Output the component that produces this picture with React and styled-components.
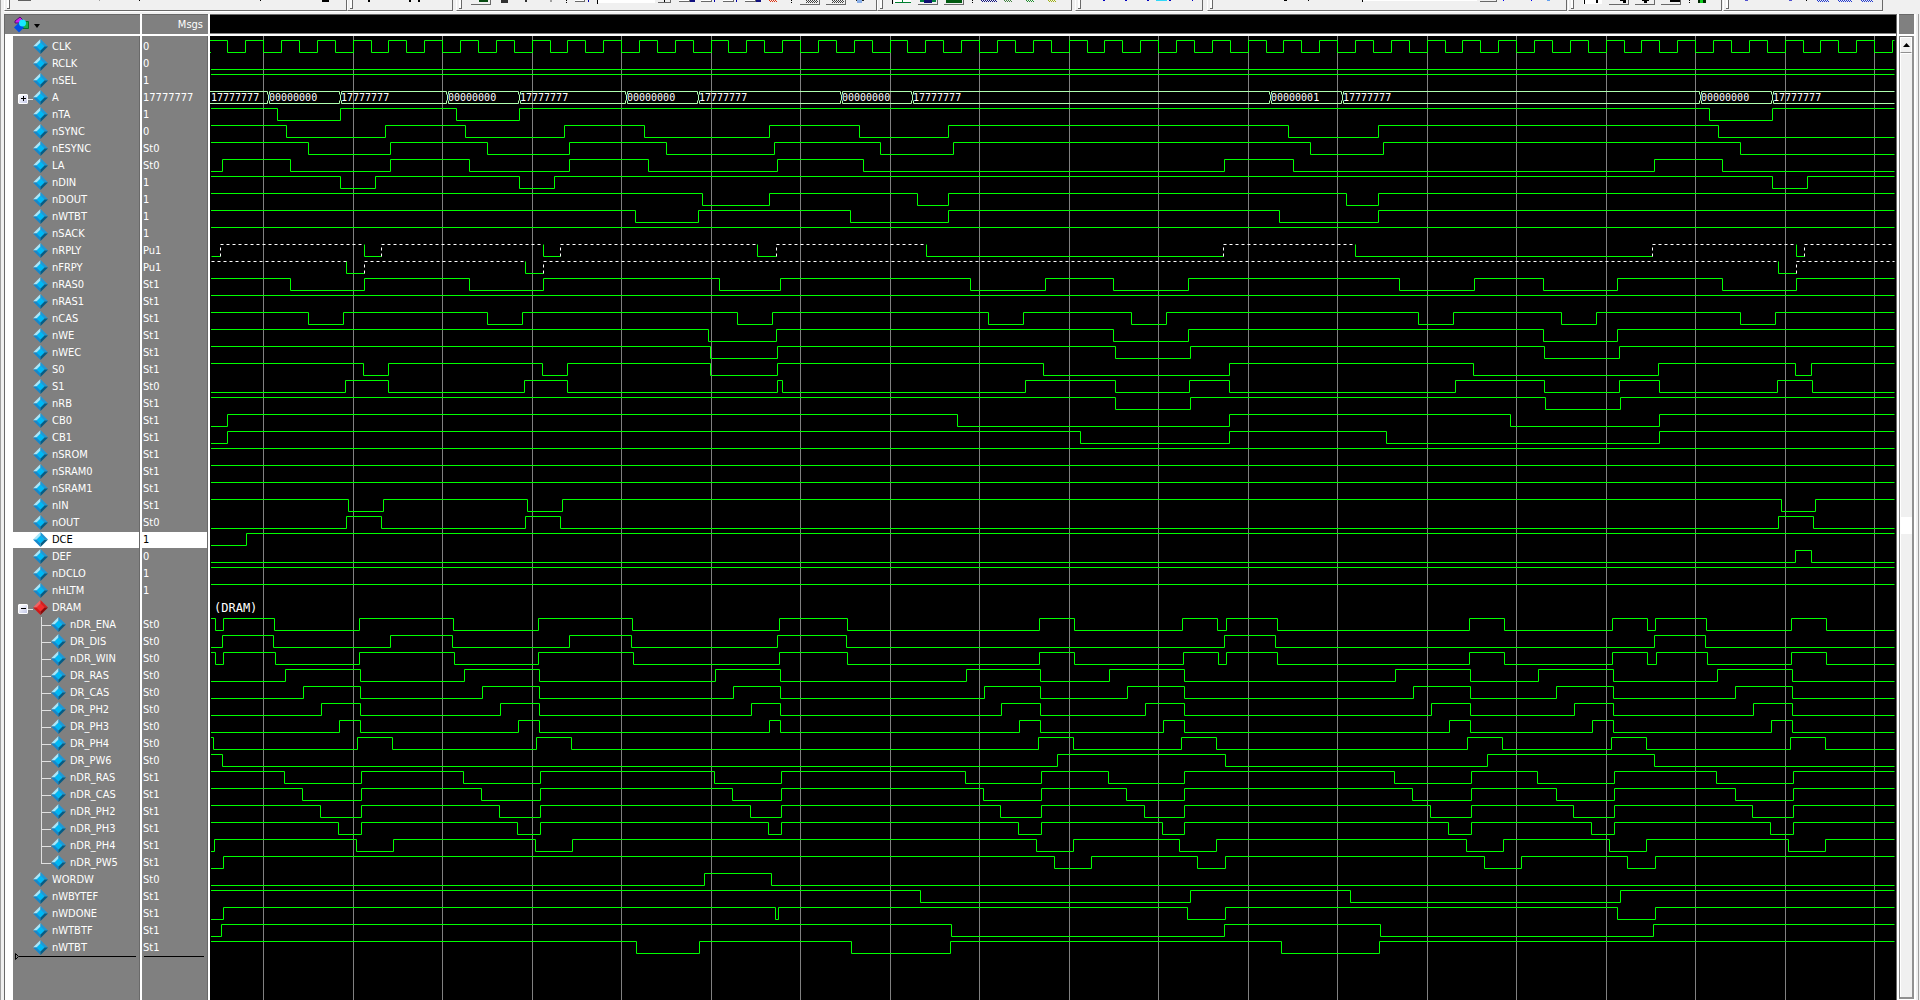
import React from 'react';
import styled, {createGlobalStyle} from 'styled-components';

const ROW = 17;
const LEFT = 210;
const RIGHT = 1894;
const GRID = [263, 353, 442, 532, 621, 711, 800, 890, 979, 1069, 1158, 1248, 1337, 1427, 1516, 1606, 1695, 1785, 1874];

const clock = Array.from({length: 95}, (_, n) => Math.floor(209.9 + 17.9 * n));

// name, value, level at the left edge, x of every toggle after it
const signals = [
  {name: 'CLK', value: '0', start: 0, edges: clock},
  {name: 'RCLK', value: '0', start: 0, edges: []},
  {name: 'nSEL', value: '1', start: 1, edges: []},
  {name: 'A', value: '17777777', box: '+', bus: [
    [210, '17777777'], [268, '00000000'], [340, '17777777'], [447, '00000000'], [519, '17777777'],
    [626, '00000000'], [698, '17777777'], [841, '00000000'], [912, '17777777'], [1270, '00000001'],
    [1342, '17777777'], [1700, '00000000'], [1772, '17777777'],
  ]},
  {name: 'nTA', value: '1', start: 1, edges: [277, 340, 456, 519, 1709, 1772]},
  {name: 'nSYNC', value: '0', start: 1, edges: [286, 385, 465, 564, 644, 769, 859, 948, 1288, 1378, 1718]},
  {name: 'nESYNC', value: 'St0', start: 1, edges: [308, 390, 487, 569, 666, 774, 880, 953, 1310, 1383, 1740]},
  {name: 'LA', value: 'St0', start: 0, edges: [222, 290, 390, 469, 569, 648, 777, 863, 1224, 1293, 1654, 1722]},
  {name: 'nDIN', value: '1', start: 1, edges: [340, 375, 519, 554, 1772, 1807]},
  {name: 'nDOUT', value: '1', start: 1, edges: [702, 769, 917, 948, 1346, 1378]},
  {name: 'nWTBT', value: '1', start: 1, edges: [635, 698, 850, 948, 1279, 1378]},
  {name: 'nSACK', value: '1', start: 1, edges: []},
  {name: 'nRPLY', value: 'Pu1', pull: true, start: 0, edges: [220, 364, 381, 543, 560, 757, 776, 926, 1223, 1355, 1652, 1796, 1804]},
  {name: 'nFRPY', value: 'Pu1', pull: true, start: 1, edges: [346, 364, 525, 543, 1778, 1796]},
  {name: 'nRAS0', value: 'St1', start: 1, edges: [290, 364, 469, 543, 719, 780, 970, 1045, 1113, 1188, 1399, 1474, 1543, 1617, 1722, 1796]},
  {name: 'nRAS1', value: 'St1', start: 1, edges: []},
  {name: 'nCAS', value: 'St1', start: 1, edges: [308, 343, 487, 522, 737, 772, 988, 1023, 1131, 1166, 1418, 1453, 1561, 1596, 1740, 1775]},
  {name: 'nWE', value: 'St1', start: 1, edges: [708, 776, 1113, 1188, 1543, 1617]},
  {name: 'nWEC', value: 'St1', start: 1, edges: [710, 777, 1115, 1190, 1544, 1619]},
  {name: 'S0', value: 'St1', start: 1, edges: [363, 388, 542, 567, 710, 777, 1043, 1229, 1473, 1658, 1795, 1811]},
  {name: 'S1', value: 'St0', start: 0, edges: [345, 388, 524, 567, 777, 782, 1025, 1115, 1189, 1229, 1455, 1544, 1619, 1659, 1777, 1812]},
  {name: 'nRB', value: 'St1', start: 1, edges: [1115, 1190, 1545, 1620]},
  {name: 'CB0', value: 'St1', start: 0, edges: [227, 957, 1229, 1510, 1659]},
  {name: 'CB1', value: 'St1', start: 0, edges: [227, 1080, 1229, 1386, 1659]},
  {name: 'nSROM', value: 'St1', start: 1, edges: []},
  {name: 'nSRAM0', value: 'St1', start: 1, edges: []},
  {name: 'nSRAM1', value: 'St1', start: 1, edges: []},
  {name: 'nIN', value: 'St1', start: 1, edges: [348, 383, 527, 562, 1781, 1815]},
  {name: 'nOUT', value: 'St0', start: 0, edges: [346, 381, 525, 560, 1778, 1813]},
  {name: 'DCE', value: '1', selected: true, start: 0, edges: [246]},
  {name: 'DEF', value: '0', start: 0, edges: [1795, 1811]},
  {name: 'nDCLO', value: '1', start: 1, edges: []},
  {name: 'nHLTM', value: '1', start: 1, edges: []},
  {name: 'DRAM', value: '', box: '-', group: true},
  {name: 'nDR_ENA', value: 'St0', child: true, start: 1, edges: [215, 223, 274, 359, 453, 538, 632, 779, 847, 1039, 1074, 1182, 1217, 1226, 1277, 1469, 1504, 1612, 1647, 1655, 1706, 1791, 1826]},
  {name: 'DR_DIS', value: 'St0', child: true, start: 0, edges: [222, 273, 390, 452, 569, 631, 777, 846, 1224, 1275, 1654, 1705]},
  {name: 'nDR_WIN', value: 'St0', child: true, start: 1, edges: [215, 223, 275, 359, 454, 538, 633, 779, 847, 1039, 1074, 1183, 1218, 1226, 1277, 1469, 1504, 1612, 1647, 1656, 1707, 1791, 1826]},
  {name: 'DR_RAS', value: 'St0', child: true, start: 0, edges: [285, 360, 464, 539, 715, 780, 966, 1040, 1109, 1184, 1395, 1470, 1538, 1613, 1717, 1792]},
  {name: 'DR_CAS', value: 'St0', child: true, start: 0, edges: [303, 360, 482, 539, 733, 780, 984, 1040, 1127, 1184, 1413, 1470, 1556, 1613, 1735, 1792]},
  {name: 'DR_PH2', value: 'St0', child: true, start: 0, edges: [321, 360, 500, 539, 751, 780, 1001, 1040, 1145, 1184, 1431, 1470, 1574, 1613, 1753, 1792]},
  {name: 'DR_PH3', value: 'St0', child: true, start: 0, edges: [339, 360, 518, 539, 769, 780, 1019, 1040, 1163, 1184, 1449, 1470, 1592, 1613, 1771, 1792]},
  {name: 'DR_PH4', value: 'St0', child: true, start: 1, edges: [213, 357, 392, 536, 571, 1038, 1073, 1181, 1216, 1467, 1502, 1611, 1646, 1790, 1825]},
  {name: 'DR_PW6', value: 'St0', child: true, start: 1, edges: [222, 1057, 1225, 1487, 1654]},
  {name: 'nDR_RAS', value: 'St1', child: true, start: 1, edges: [284, 361, 463, 540, 714, 781, 965, 1041, 1108, 1184, 1394, 1471, 1537, 1614, 1716, 1793]},
  {name: 'nDR_CAS', value: 'St1', child: true, start: 1, edges: [302, 361, 481, 540, 732, 781, 983, 1041, 1126, 1184, 1412, 1471, 1556, 1614, 1735, 1793]},
  {name: 'nDR_PH2', value: 'St1', child: true, start: 1, edges: [320, 361, 499, 540, 750, 781, 1000, 1041, 1144, 1184, 1430, 1471, 1573, 1614, 1752, 1793]},
  {name: 'nDR_PH3', value: 'St1', child: true, start: 1, edges: [338, 361, 517, 540, 768, 781, 1018, 1041, 1162, 1184, 1448, 1471, 1591, 1614, 1770, 1793]},
  {name: 'nDR_PH4', value: 'St1', child: true, start: 0, edges: [214, 356, 393, 535, 572, 1036, 1073, 1179, 1216, 1466, 1503, 1609, 1646, 1788, 1825]},
  {name: 'nDR_PW5', value: 'St1', child: true, last: true, start: 0, edges: [223, 1054, 1091, 1197, 1225, 1484, 1521, 1627, 1655]},
  {name: 'WORDW', value: 'St0', start: 0, edges: [704, 771]},
  {name: 'nWBYTEF', value: 'St1', start: 1, edges: [920, 1190, 1350, 1620]},
  {name: 'nWDONE', value: 'St1', start: 0, edges: [223, 775, 778, 1187, 1225, 1617, 1655]},
  {name: 'nWTBTF', value: 'St1', start: 0, edges: [221, 951, 1224, 1380, 1653]},
  {name: 'nWTBT', value: 'St1', start: 1, edges: [636, 699, 851, 950, 1281, 1379]},
];

// bottoms of the toolbar icons: [x, width, height, colour, kind]
const toolbars = [
  {from: 4, to: 347, parts: [[18, 13, 1, '#606060'], [99, 1, 1, '#a0a0a0'], [139, 1, 1, '#000'], [260, 1, 1, '#000'], [322, 7, 2, '#000']]},
  {from: 347, to: 453, parts: [[368, 2, 2, '#000'], [409, 2, 2, '#000'], [418, 2, 2, '#000']]},
  {from: 456, to: 877, parts: [
    [471, 20, 5, '#f0f0f0', 'button'], [479, 9, 2, '#064a10'], [501, 7, 3, '#303030'], [525, 2, 2, '#303030'], [550, 2, 2, '#a0a0a0'],
    [566, 1, 1, '#000'], [566, 1, 1, '#000', 'dot'], [575, 10, 2, '#fff', 'button'], [588, 1, 2, '#0000b0'], [597, 58, 4, '#fff', 'field'],
    [658, 13, 3, '#f0f0f0', 'button'], [664, 1, 2, '#000'],
    [679, 11, 2, '#fff', 'button'], [690, 5, 2, '#101080'], [701, 11, 2, '#fff', 'button'], [714, 1, 2, '#0000b0'],
    [723, 11, 2, '#fff', 'button'], [736, 1, 2, '#0000b0'], [745, 11, 2, '#fff', 'button'], [756, 5, 2, '#101080'],
    [769, 9, 2, '#e03010', 'dither'], [791, 1, 1, '#000'], [791, 1, 1, '#000', 'dot'],
    [800, 20, 5, '#f0f0f0', 'button'], [806, 12, 3, '#404040', 'dither'], [826, 20, 5, '#f0f0f0', 'button'], [832, 12, 3, '#404040', 'dither'],
    [856, 8, 1, '#202020'], [857, 5, 3, '#88aee8'],
  ]},
  {from: 877, to: 1072, parts: [
    [892, 1, 4, '#000'], [894, 17, 3, '#fff'], [902, 1, 3, '#008030'], [895, 16, 1, '#008030', 'dot'],
    [918, 20, 5, '#f0f0f0', 'button'], [920, 16, 2, '#008040'], [924, 8, 3, '#101070'],
    [944, 20, 5, '#f0f0f0', 'button'], [946, 16, 3, '#005a10'], [972, 1, 1, '#000'], [972, 1, 1, '#000', 'dot'],
    [981, 16, 2, '#101080', 'dither'], [1004, 9, 2, '#408040', 'dither'], [1026, 8, 2, '#209030', 'dither'], [1048, 8, 2, '#a0b010', 'dither'],
  ]},
  {from: 1075, to: 1203, parts: [[1103, 2, 1, '#0000c0'], [1125, 2, 1, '#0000c0'], [1147, 2, 1, '#0000c0'], [1156, 11, 1, '#30d8f8'], [1169, 2, 1, '#0000c0'], [1192, 1, 1, '#0000c0']]},
  {from: 1207, to: 1567, parts: [[1284, 3, 1, '#000'], [1308, 1, 1, '#000'], [1362, 115, 2, '#fff', 'field'], [1480, 17, 2, '#f0f0f0', 'button'], [1503, 1, 1, '#0000f0'], [1531, 1, 1, '#0000f0'], [1547, 3, 1, '#60a0f0']]},
  {from: 1568, to: 1722, parts: [
    [1583, 19, 4, '#fff'], [1584, 1, 4, '#000'], [1596, 2, 3, '#000'], [1609, 20, 5, '#f0f0f0', 'button'], [1620, 6, 1, '#000'], [1623, 3, 3, '#000'],
    [1635, 20, 5, '#f0f0f0', 'button'], [1642, 7, 1, '#000'], [1644, 3, 3, '#000'], [1661, 20, 5, '#f0f0f0', 'button'], [1670, 10, 2, '#000'],
    [1689, 1, 1, '#000'], [1689, 1, 1, '#000', 'dot'], [1698, 8, 3, '#002800'], [1700, 3, 3, '#10d020'],
  ]},
  {from: 1723, to: 1883, parts: [[1745, 3, 1, '#5050d0'], [1789, 3, 1, '#5050d0'], [1806, 1, 1, '#000'], [1817, 13, 2, '#2038d0', 'dither'], [1838, 15, 2, '#2038d0', 'dither'], [1861, 13, 2, '#2038d0', 'dither']]},
];

const px = (x) => x - LEFT + 0.5;
const top = (row) => row * ROW + 4.5;

const tracePath = ({start, edges}, row) => {
  const high = top(row);
  const y = (level) => (level ? high : high + 12);
  let level = start;
  let d = `M1 ${y(level)}`;
  edges.forEach((x) => {
    level = 1 - level;
    d += `H${px(x)}V${y(level)}`;
  });
  return `${d}H${px(RIGHT)}`;
};

// pulled-up nets: strong zero is solid green, weak one is dashed white
const pullPaths = ({start, edges}, row) => {
  const high = top(row);
  const low = high + 12;
  let level = start;
  let x = LEFT + 1;
  let solid = '';
  let dashed = '';
  [...edges, RIGHT].forEach((next, i, all) => {
    if (level) {
      dashed += `M${px(x)} ${high}H${px(next)}`;
      if (i < all.length - 1) solid += `M${px(next)} ${high}V${low}`;
    } else {
      solid += `M${px(x)} ${low}H${px(next)}`;
      if (i < all.length - 1) dashed += `M${px(next)} ${low}V${high}`;
    }
    level = 1 - level;
    x = next;
  });
  return {solid, dashed};
};

const Trace = ({signal, row}) => {
  if (signal.group) return <TraceText $large x="4" y={row * ROW + 15}>(DRAM)</TraceText>;
  if (signal.bus) {
    const high = top(row);
    return signal.bus.map(([x, label], i) => {
      const end = i + 1 < signal.bus.length ? signal.bus[i + 1][0] : RIGHT + 1;
      const s = i ? px(x) + 1 : 0;
      const e = px(end) - 1;
      return (
        <g key={x}>
          <BusLine d={`M${s} ${high}H${e}M${s} ${high + 12}H${e}`}/>
          {i > 0 && <BusLine d={`M${s} ${high}v3M${s} ${high + 9}v3M${s - 1} ${high + 3}v6M${s - 2} ${high}v3M${s - 2} ${high + 9}v3`}/>}
          <TraceText x={Math.max(1, Math.floor(s))} y={row * ROW + 14}>{label}</TraceText>
        </g>
      );
    });
  }
  if (signal.pull) {
    const {solid, dashed} = pullPaths(signal, row);
    return (
      <>
        <Line d={solid}/>
        <PullLine d={dashed}/>
      </>
    );
  }
  return <Line d={tracePath(signal, row)}/>;
};

const Diamond = ({red}) => (
  <Glyph width="15" height="15" viewBox="0 0 15 15" aria-hidden="true">
    <path d="M7.5 0L0 7.5h4L7.5 4z" fill={red ? '#f06464' : '#a8e6fa'}/>
    <path d="M7.5 0L15 7.5h-4L7.5 4z" fill={red ? '#d42020' : '#2098d4'}/>
    <path d="M0 7.5L7.5 15v-4L4 7.5z" fill={red ? '#d01818' : '#1488cc'}/>
    <path d="M15 7.5L7.5 15v-4L11 7.5z" fill={red ? '#8c0808' : '#065c84'}/>
    <path d="M7.5 3.5l4 4-4 4-4-4z" fill={red ? '#f42c2c' : '#00b8f4'}/>
  </Glyph>
);

const Part = ({part: [x, w, h, fill, kind]}) => {
  if (kind === 'button') {
    return (
      <g>
        <rect x={x} y="0" width={w} height={h} fill="#696969"/>
        <rect x={x} y="0" width={w - 1} height={h - 1} fill={fill}/>
      </g>
    );
  }
  if (kind === 'field') {
    return (
      <g>
        <rect x={x} y="0" width={w} height={h - 1} fill={fill}/>
        <rect x={x} y="0" width="1" height={h} fill="#000"/>
      </g>
    );
  }
  if (kind === 'dither') {
    return Array.from({length: h}, (_, i) => (
      <path key={i} d={`M${x + (i % 2)} ${i + 0.5}h${w - 1}`} stroke={fill} strokeDasharray="1 1"/>
    ));
  }
  return <rect x={x} y={kind === 'dot' ? 2 : 0} width={w} height={h} fill={fill}/>;
};

const App = () => (
  <Page>
    <GlobalStyle/>
    <ToolbarStrip>
      {toolbars.map((bar, i) => (
        <Toolbar
          key={bar.from}
          role="toolbar"
          $width={bar.to - bar.from}
          $gap={i + 1 < toolbars.length ? toolbars[i + 1].from - bar.to : 0}
        >
          <Grip/>
          <ToolIcons viewBox={`${bar.from + 7} 0 ${bar.to - bar.from - 8} 9`} width={bar.to - bar.from - 8} height="9" aria-hidden="true">
            {bar.parts.map((part, n) => <Part key={n} part={part}/>)}
          </ToolIcons>
        </Toolbar>
      ))}
    </ToolbarStrip>
    <Window>
      <NameColumn>
        <ColumnHeader>
          <MenuButton aria-label="Signal options">
            <svg width="27" height="18" viewBox="0 0 27 18" aria-hidden="true">
              <path d="M7 1l4 4-5 2H2V5z" fill="#d020f0" stroke="#501070"/>
              <path d="M9.5 5.5h6v7h-6z" fill="#18b048" stroke="#087028"/>
              <path d="M6 6.5l5 5-5 5-5-5z" fill="#0050e8"/>
              <circle cx="9.5" cy="7" r="3.5" fill="#18e8ff"/>
              <path d="M21 8h6l-3 4z" fill="#000"/>
            </svg>
          </MenuButton>
        </ColumnHeader>
        <NameList>
          {signals.map((s, i) => (
            <Row key={i} $selected={s.selected}>
              {s.child ? <Branch $last={s.last}/> : (
                <Stem>
                  {s.box && <Expander aria-label={s.box === '+' ? 'Expand' : 'Collapse'}>
                    <svg width="8" height="8" viewBox="0 0 8 8" aria-hidden="true">
                      <path d={s.box === '+' ? 'M2 3.5h5M4.5 1v5' : 'M2 3.5h5'} stroke="#000"/>
                    </svg>
                  </Expander>}
                  {s.box && <Link/>}
                </Stem>
              )}
              <Diamond red={s.group}/>
              <span>{s.name}</span>
            </Row>
          ))}
        </NameList>
        <InsertMark $edge>
          <svg width="4" height="7" viewBox="0 0 4 7" aria-hidden="true">
            <path d="M.5 .5v6l3-3z" fill="none" stroke="#000"/>
          </svg>
          <InsertLine/>
        </InsertMark>
      </NameColumn>
      <ValueColumn>
        <ColumnHeader $right>Msgs</ColumnHeader>
        <List>
          {signals.map((s, i) => <ValueRow key={i} $selected={s.selected}>{s.value}</ValueRow>)}
        </List>
        <InsertMark><InsertLine/></InsertMark>
      </ValueColumn>
      <WaveColumn>
        <ColumnHeader $dark/>
        <WaveBody>
          <Waves aria-label="Waveforms">
            {GRID.map((x) => <GridLine key={x} x1={px(x)} x2={px(x)} y1="0" y2="100%"/>)}
            {signals.map((s, i) => <Trace key={i} signal={s} row={i}/>)}
          </Waves>
        </WaveBody>
      </WaveColumn>
      <ScrollColumn>
        <ColumnHeader/>
        <Track>
          <ScrollButton aria-label="Scroll up">
            <svg width="7" height="4" viewBox="0 0 7 4" aria-hidden="true">
              <path d="M0 4L3.5 0 7 4z" fill="#000"/>
            </svg>
          </ScrollButton>
          <Thumb/>
          <ThumbMark/>
          <Thumb/>
        </Track>
      </ScrollColumn>
    </Window>
  </Page>
);

const GlobalStyle = createGlobalStyle`
  * {
    box-sizing: border-box;
  }
  body {
    margin: 0;
    background: #f0f0f0;
    font: 11px/15px 'DejaVu Sans Condensed', 'DejaVu Sans', sans-serif;
  }
`
const Page = styled.main`
  height: 100vh;
  display: flex;
  flex-direction: column;
  overflow: hidden;
  border-left: 1px solid #a0a0a0;
`
const ToolbarStrip = styled.div`
  display: flex;
  flex: none;
  height: 14px;
  padding-left: 3px;
`
const Toolbar = styled.div`
  display: flex;
  flex: none;
  width: ${(p) => p.$width}px;
  height: 11px;
  margin-right: ${(p) => p.$gap}px;
  border-left: 1px solid #fff;
  border-right: 1px solid #696969;
  border-bottom: 1px solid #696969;
  box-shadow: 0 1px #fff;
`
const Grip = styled.div`
  width: 3px;
  height: 9px;
  margin: 0 1px 0 2px;
  border-right: 1px solid #696969;
  border-bottom: 1px solid #696969;
  background: #fff;
`
const ToolIcons = styled.svg`
  flex: none;
  shape-rendering: crispEdges;
`
const Window = styled.div`
  flex: 1;
  min-height: 0;
  display: flex;
  margin: 0 2px 0 3px;
  border-left: 1px solid #696969;
`
const ColumnHeader = styled.div`
  display: flex;
  flex: none;
  align-items: center;
  justify-content: ${(p) => (p.$right ? 'flex-end' : 'flex-start')};
  height: 22px;
  padding: 0 5px 0 8px;
  color: #fff;
  background: ${(p) => (p.$dark ? '#000' : '#808080')};
  border-top: 1px solid #696969;
  border-bottom: 2px solid #fff;
  box-shadow: inset 0 -1px #808080;
`
const Column = styled.section`
  flex: none;
  display: flex;
  flex-direction: column;
  background: #808080;
`
const NameColumn = styled(Column)`
  width: 137px;
  border-right: 2px solid #fff;
  box-shadow: inset -1px 0 #696969;
`
const ValueColumn = styled(Column)`
  width: 68px;
  border-right: 2px solid #fff;
  box-shadow: inset -1px 0 #696969;
`
const WaveColumn = styled(Column)`
  flex: 1;
  min-width: 0;
  background: #000;
  border-right: 1px solid #696969;
`
const MenuButton = styled.button`
  display: flex;
  padding: 0;
  border: 0;
  background: none;
`
const List = styled.ul`
  flex: none;
  margin: 0;
  padding: 3px 0 0;
  list-style: none;
`
const NameList = styled(List)`
  border-left: 8px solid #fff;
`
const Row = styled.li`
  display: flex;
  height: ${ROW}px;
  padding-bottom: 1px;
  margin-right: 1px;
  white-space: pre;
  color: ${(p) => (p.$selected ? '#000' : '#fff')};
  background: ${(p) => (p.$selected ? '#fff' : 'transparent')} content-box;
`
const ValueRow = styled(Row)`
  text-indent: 1px;
`
const Glyph = styled.svg`
  flex: none;
  margin-right: 4px;
`
const Stem = styled.div`
  flex: none;
  display: flex;
  align-items: center;
  width: 20px;
  height: 16px;
  padding: 2px 0 0 5px;
`
const Expander = styled.button`
  flex: none;
  display: flex;
  width: 10px;
  height: 10px;
  padding: 0;
  border: 1px solid #fff;
  border-radius: 1px;
  background: linear-gradient(135deg, #fff, #c4c8e8);
`
const Link = styled.div`
  flex: 1;
  height: 1px;
  background: #e0e0e0;
`
const Branch = styled.div`
  flex: none;
  width: 10px;
  height: ${(p) => (p.$last ? 9 : ROW)}px;
  margin-left: 28px;
  border-left: 1px solid #e0e0e0;
  background: linear-gradient(#e0e0e0, #e0e0e0) 0 8px / 100% 1px no-repeat;
`
const InsertMark = styled.div`
  flex: 1;
  display: flex;
  align-items: flex-start;
  padding: 0 4px 0 2px;
  border-left: ${(p) => (p.$edge ? 8 : 0)}px solid #fff;
  svg {
    margin-top: -4px;
  }
`
const InsertLine = styled.div`
  flex: 1;
  height: 1px;
  margin-top: -1px;
  background: #000;
`
const WaveBody = styled.div`
  flex: 1;
  min-height: 0;
  overflow: hidden;
`
const Waves = styled.svg`
  display: block;
  width: 100%;
  height: 100%;
`
const GridLine = styled.line`
  stroke: #808080;
`
const Line = styled.path`
  fill: none;
  stroke: #00ff00;
`
const PullLine = styled(Line)`
  stroke: #fff;
  stroke-dasharray: 3 3;
`
const BusLine = styled(Line)`
  stroke: #b0ffb0;
`
const TraceText = styled.text`
  fill: #fff;
  font-family: 'DejaVu Sans Mono', monospace;
  font-size: ${(p) => (p.$large ? 12 : 10)}px;
`
const ScrollColumn = styled(Column)`
  width: 21px;
  padding: 0 2px;
  background: #fff;
  border-right: 2px solid #f0f0f0;
  box-shadow: 1px 0 #a0a0a0;
`
const Track = styled.div`
  flex: 1;
  display: flex;
  flex-direction: column;
  margin-bottom: 1px;
  border: 1px solid #808080;
  border-right: 2px solid #909090;
  border-bottom: 2px solid #909090;
`
const ScrollButton = styled.button`
  flex: none;
  display: flex;
  align-items: center;
  justify-content: center;
  height: 16px;
  padding: 0;
  border: 1px solid #fff;
  border-bottom-color: #909090;
  background: #f0f0f0;
`
const Thumb = styled.div`
  flex: 1;
  background: #f0f0f0;
  border-top: 1px solid #fff;
  border-left: 1px solid #fff;
`
const ThumbMark = styled.div`
  height: 16px;
  background: #fff;
`
export default App;
